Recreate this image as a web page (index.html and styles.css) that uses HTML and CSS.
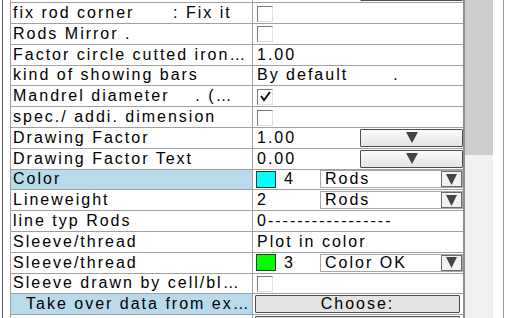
FILE: index.html
```html
<!DOCTYPE html>
<html lang="en">
<head>
    <meta charset="UTF-8">
    <title>Rod Properties</title>
    <link rel="stylesheet" href="styles.css">
</head>
<body>
    <div class="window">
        <div class="rail"></div>

        <div class="sheet">
            <div class="row">
                <div class="label"></div>
                <div class="value"><span class="btn wide"></span></div>
            </div>
            <div class="row">
                <div class="label">fix rod corner      : Fix it</div>
                <div class="value"><span class="check"></span></div>
            </div>
            <div class="row">
                <div class="label">Rods Mirror .</div>
                <div class="value"><span class="check"></span></div>
            </div>
            <div class="row">
                <div class="label">Factor circle cutted iron…</div>
                <div class="value">1.00</div>
            </div>
            <div class="row">
                <div class="label">kind of showing bars</div>
                <div class="value">By default       .</div>
            </div>
            <div class="row">
                <div class="label">Mandrel diameter    . (…</div>
                <div class="value">
                    <span class="check">
                        <svg width="13" height="13" viewBox="0 0 13 13"><polyline points="2,6 5,10 11,2" fill="none" stroke="#111" stroke-width="2"/></svg>
                    </span>
                </div>
            </div>
            <div class="row">
                <div class="label">spec./ addi. dimension</div>
                <div class="value"><span class="check"></span></div>
            </div>
            <div class="row">
                <div class="label">Drawing Factor</div>
                <div class="value">1.00<span class="btn wide"><svg class="arrow" width="12" height="11" viewBox="0 0 12 11"><polygon points="0,0 12,0 6,11" fill="#444"/></svg></span></div>
            </div>
            <div class="row">
                <div class="label">Drawing Factor Text</div>
                <div class="value">0.00<span class="btn wide"><svg class="arrow" width="12" height="11" viewBox="0 0 12 11"><polygon points="0,0 12,0 6,11" fill="#444"/></svg></span></div>
            </div>
            <div class="row">
                <div class="label active">Color</div>
                <div class="value">
                    <span class="swatch" style="background: #00ffff;"></span>
                    <span class="num">4</span>
                    <span class="select">Rods<span class="drop"><svg width="11" height="11" viewBox="0 0 11 11"><polygon points="0,0 11,0 5.5,11" fill="#444"/></svg></span></span>
                </div>
            </div>
            <div class="row">
                <div class="label">Lineweight</div>
                <div class="value">
                    <span class="num plain">2</span>
                    <span class="select">Rods<span class="drop"><svg width="11" height="11" viewBox="0 0 11 11"><polygon points="0,0 11,0 5.5,11" fill="#444"/></svg></span></span>
                </div>
            </div>
            <div class="row">
                <div class="label">line typ Rods</div>
                <div class="value">0-----------------</div>
            </div>
            <div class="row">
                <div class="label">Sleeve/thread</div>
                <div class="value">Plot in color</div>
            </div>
            <div class="row">
                <div class="label">Sleeve/thread</div>
                <div class="value">
                    <span class="swatch" style="background: #00ff00;"></span>
                    <span class="num">3</span>
                    <span class="select">Color OK<span class="drop"><svg width="11" height="11" viewBox="0 0 11 11"><polygon points="0,0 11,0 5.5,11" fill="#444"/></svg></span></span>
                </div>
            </div>
            <div class="row">
                <div class="label">Sleeve drawn by cell/bl…</div>
                <div class="value"><span class="check"></span></div>
            </div>
            <div class="row">
                <div class="label active indent">Take over data from ex…</div>
                <div class="value"><span class="btn choose">Choose:</span></div>
            </div>
            <div class="row">
                <div class="label"></div>
                <div class="value"><span class="btn choose"></span></div>
            </div>
        </div>

        <div class="scroll"><div class="thumb"></div></div>
        <div class="edge"></div>
    </div>
</body>
</html>
```

FILE: styles.css
```css
/* Property grid */
body {
    margin: 0;
    background: white;
    font-family: 'Liberation Sans', Arial, sans-serif;
    font-size: 16px;
    color: #000;
}

.window {
    display: flex;
    height: 318px;
    overflow: hidden;
}

.rail {
    width: 7px;
    margin-left: 2px;
    border-left: 1px solid #5a5a5a;
}

.sheet {
    width: 452px;
    border-left: 1px solid #a0a0a0;
    border-right: 2px solid #8f8f8f;
    margin-top: -17.6px;
}

.row {
    display: grid;
    grid-template-columns: 242px 210px;
    height: 20.8px;
    box-sizing: border-box;
    border-bottom: 1px solid #a0a0a0;
}

.label,
.value {
    display: flex;
    align-items: center;
    white-space: pre;
    letter-spacing: 2px;
    overflow: hidden;
}

.label {
    padding-left: 2px;
    border-right: 1px solid #a0a0a0;
}

.label.active {
    background-color: #b9daea;
}

.label.indent {
    padding-left: 15px;
}

.value {
    padding-left: 4px;
}

.check {
    width: 14px;
    height: 14px;
    margin-top: 1px;
    border-top: 1px solid #7a7a7a;
    border-left: 1px solid #7a7a7a;
    border-right: 1px solid #e2e2e2;
    border-bottom: 1px solid #e2e2e2;
    background: white;
    display: flex;
    align-items: center;
    justify-content: center;
}

.btn {
    display: flex;
    align-items: center;
    justify-content: center;
    box-sizing: border-box;
    height: 18px;
    border: 1px solid #4d4d4d;
    border-radius: 1px;
    background: linear-gradient(#fbfbfb, #e4e4e4);
}

.btn.wide {
    width: 103px;
    margin-left: auto;
}

.btn.choose {
    width: 205px;
    margin-left: -2px;
    background: #e3e3e3;
    letter-spacing: 2px;
}

.swatch {
    width: 18px;
    height: 15px;
    border: 1px solid #333;
    margin-left: -1px;
}

.num {
    margin-left: 8px;
}

.num.plain {
    margin-left: 0;
}

.select {
    display: flex;
    align-items: center;
    margin-left: auto;
    width: 143px;
    height: 18px;
    box-sizing: border-box;
    padding-left: 4px;
    border: 1px solid #a8a8a8;
    background: white;
}

.drop {
    margin-left: auto;
    width: 21px;
    height: 16px;
    box-sizing: border-box;
    border: 1px solid #6a6a6a;
    background: #f2f2f2;
    display: flex;
    align-items: center;
    justify-content: center;
}

.scroll {
    width: 28px;
    background: #f0f0f0;
}

.thumb {
    height: 155px;
    background: #cdcdcd;
}

.edge {
    width: 10px;
    border-right: 1px solid #9a9a9a;
}
```
